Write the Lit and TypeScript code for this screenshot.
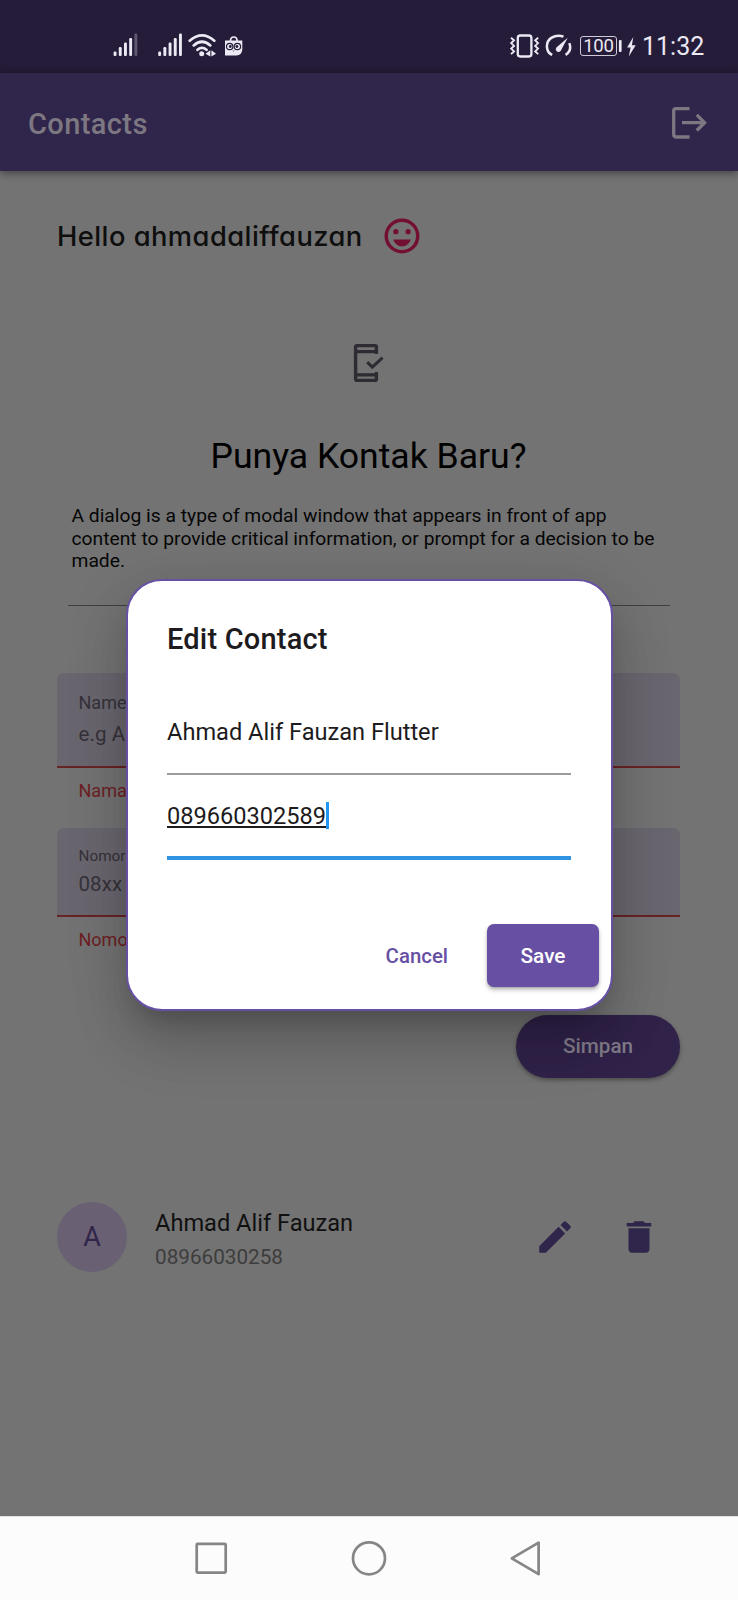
import { LitElement, html, css, svg } from "lit";
import { customElement, property } from "lit/decorators.js";

@customElement("status-bar")
class StatusBar extends LitElement {
  static styles = css`
    :host { display: flex; height: 73px; background: #241c38; color: #ece8f4; box-sizing: border-box; padding: 0 35px 0 112px; justify-content: space-between; }
    .group { display: flex; align-items: center; height: 91px; }
    .signals { display: block; width: 134px; height: 26px; }
    .icons { display: block; width: 67px; height: 26px; }
    .battery { box-sizing: border-box; width: 37px; height: 20px; border: 1.4px solid #cfcad8; border-radius: 3px; font-size: 18.6px; line-height: 18px; text-align: center; letter-spacing: -0.2px; margin-left: 4px; }
    .charge { display: block; width: 22px; height: 26px; }
    .time { font-size: 25px; line-height: 30px; margin: 2px 0 0 3px; width: 61px; white-space: nowrap; }
  `;
  render() {
    const bars = (x: number, faded: boolean) =>
      [0, 1, 2, 3, 4].map(i => svg`<rect x=${x + i * 5.2} y=${18.6 - i * 4.5} width="2.9" height=${4.4 + i * 4.5} rx="1.1" fill="currentColor" opacity=${faded && i === 4 ? 0.3 : 1}></rect>`);
    return html`
      <div class="group">
        <svg class="signals" viewBox="112 32.5 134 26" fill="none" stroke="currentColor">
          <g transform="translate(0 32.5)" stroke="none">${bars(113.6, true)}${bars(158.2, false)}</g>
          <path d="M189.7 40.2Q202 29.7 214.3 40.2M193.7 44.9Q202 37.6 210.3 44.9M197.5 49.3Q202 45.6 206.5 49.3" stroke-width="2.7" stroke-linecap="round"></path>
          <circle cx="201.7" cy="53.3" r="2.5" fill="currentColor" stroke="none"></circle>
          <path d="M205.5 53.3l4.8-3.6v6.2zM216 53.3l-4.6-3.6v6.2z" fill="currentColor" stroke="none"></path>
          <path d="M230.5 40.5q0-4 3.3-4t3.3 4" stroke-width="1.7"></path>
          <path d="M225 40h17.3v9.5q-.6 5-5.8 5.5H225z" fill="currentColor" stroke="none"></path>
          <g stroke="#241c38" stroke-width="1.2"><circle cx="229.7" cy="46" r="3.2"></circle><circle cx="237.4" cy="46" r="3.2"></circle></g>
          <g fill="#241c38" stroke="none"><circle cx="230.3" cy="46" r="1.4"></circle><circle cx="236.9" cy="46" r="1.4"></circle></g>
          <path d="M232.3 50l1.3 1.4 1.3-1.4z" fill="#8b8598" stroke="none"></path>
        </svg>
      </div>
      <div class="group">
        <svg class="icons" viewBox="509 32.5 67 26" fill="none" stroke="currentColor">
          <rect x="517.8" y="35" width="13.6" height="21" rx="2.4" stroke-width="2.3"></rect>
          <path d="M511 37.3l3 2.6-2.8 2.7 2.8 2.8-2.8 2.7 2.8 2.8-3 2.7M538.2 37.3l-3 2.6 2.8 2.7-2.8 2.8 2.8 2.7-2.8 2.8 3 2.7" stroke-width="1.9"></path>
          <path d="M552.2 54.4C545.5 51.5 545.2 41.5 551.3 37.4Q557.3 33.6 563.5 36.2M569.3 42.6Q572.2 50 565.6 54.4" stroke-width="2.5"></path>
          <path d="M567.7 37.3L560.8 50.2A2.7 2.7 0 1 1 556.9 46.6z" fill="currentColor" stroke="none"></path>
        </svg>
        <div class="battery">100</div>
        <svg class="charge" viewBox="617.5 32.5 22 26" fill="currentColor">
          <rect x="619.4" y="39.4" width="2.7" height="12" rx="1"></rect>
          <path d="M633.8 36.5L627.6 47h3.5l-1.8 9L636.2 44.8h-3.8z"></path>
        </svg>
        <div class="time">11:32</div>
      </div>`;
  }
}

@customElement("filled-field")
class FilledField extends LitElement {
  @property() label = "";
  @property() hint = "";
  @property() error = "";
  static styles = css`
    :host { display: flex; flex-direction: column; }
    .box { box-sizing: border-box; background: #6a666f; border-bottom: 2px solid #682325; border-radius: 7px 7px 0 0; padding: 17px 21.5px 0; color: #353239; height: 95px; }
    .label { font-size: 18px; line-height: 26px; }
    .hint { font-size: 20.5px; line-height: 36px; letter-spacing: .1px; }
    .error { font-size: 18px; line-height: 24px; padding: 11px 21.5px 0; color: #6d2023; }
    :host([compact]) .box { height: 89px; padding-top: 16px; }
    :host([compact]) .label { font-size: 15.3px; line-height: 24px; }
    :host([compact]) .hint { line-height: 32px; }
  `;
  render() {
    return html`<div class="box"><div class="label">${this.label}</div><div class="hint">${this.hint}</div></div><div class="error">${this.error}</div>`;
  }
}

@customElement("edit-dialog")
class EditDialog extends LitElement {
  static styles = css`
    :host { display: flex; flex-direction: column; box-sizing: border-box; background: #fff; border: 2px solid #6750a4; border-radius: 36px; padding: 40px 12px 22px 39px; color: #1d1b20; box-shadow: 0 19px 26px -12px rgba(0,0,0,.2), 0 36px 58px 0 rgba(0,0,0,.12), 0 15px 60px 6px rgba(0,0,0,.11); }
    .title { font-size: 29px; line-height: 36px; font-weight: 500; letter-spacing: .2px; }
    .field { box-sizing: border-box; width: 404px; font-size: 23.6px; line-height: 30px; display: flex; align-items: flex-start; }
    .name { height: 59px; margin-top: 60px; border-bottom: 2px solid #9c9c9c; }
    .phone { height: 86px; border-bottom: 4px solid #3093e2; padding-top: 26px; }
    .num { text-decoration: underline; text-decoration-thickness: 1.5px; text-underline-offset: 2px; text-decoration-skip-ink: none; }
    .caret { width: 3px; height: 27px; background: #2196f3; margin-top: 1px; }
    .actions { display: flex; justify-content: flex-end; align-items: center; gap: 39px; margin-top: 64px; font-size: 20.4px; font-weight: 500; }
    .cancel { color: #6750a4; }
    .save { width: 112px; height: 63px; line-height: 64px; text-align: center; color: #fff; background: #6750a4; border-radius: 7px; font-size: 20.8px; box-shadow: 0 3px 4px rgba(0,0,0,.25), 0 1px 2px rgba(0,0,0,.15); }
  `;
  render() {
    return html`
      <div class="title">Edit Contact</div>
      <div class="field name">Ahmad Alif Fauzan Flutter</div>
      <div class="field phone"><span class="num">089660302589</span><span class="caret"></span></div>
      <div class="actions"><span class="cancel">Cancel</span><span class="save">Save</span></div>`;
  }
}

@customElement("app-root")
class AppRoot extends LitElement {
  static styles = css`
    :host { display: flex; flex-direction: column; position: relative; width: 738px; height: 1600px; overflow: hidden; background: #737373; font-family: Roboto, sans-serif; }
    .bar { position: relative; display: flex; align-items: center; justify-content: space-between; height: 98px; box-sizing: border-box; padding: 1px 30px 0 28px; background: #30254a; box-shadow: 0 2px 8px rgba(0,0,0,.45); color: #7d7782; }
    .heading { font-size: 29px; line-height: 36px; font-weight: 500; letter-spacing: .4px; padding-top: 2px; }
    .logout { display: block; width: 37px; height: 34px; }
    .main { flex: 1; display: flex; flex-direction: column; padding: 44px 58px 0 57px; }
    .greeting { display: flex; align-items: center; height: 42px; gap: 19px; font-family: Inter, sans-serif; font-weight: 500; font-size: 27.3px; letter-spacing: .46px; color: #0e0e0e; font-feature-settings: "cv11", "ss03"; }
    .hello { width: 305px; white-space: nowrap; line-height: 42px; padding-top: 2px; }
    .icon { display: block; width: 42px; height: 42px; }
    .smile { color: #740f34; }
    .phone { display: block; width: 32px; height: 40px; margin: 86px 0 0 296px; }
    .ask { font-size: 35.6px; line-height: 44px; text-align: center; margin-top: 51px; color: #000; }
    .about { font-size: 19.25px; line-height: 22.5px; margin: 27px 0 0 14.5px; width: 600px; color: #060606; }
    .rule { height: 1px; background: #404040; margin: 32px 10px 0 11px; }
    .first { margin-top: 67.5px; }
    .second { margin-top: 25px; }
    .simpan { align-self: flex-end; width: 164px; height: 63px; line-height: 63px; margin-top: 63px; border-radius: 32px; text-align: center; background: #302249; color: #817b89; font-size: 20.7px; font-weight: 500; box-shadow: 0 2px 4px rgba(0,0,0,.35); }
    .contact { display: flex; align-items: center; height: 70px; margin-top: 124px; padding-right: 20px; color: #30254a; }
    .avatar { width: 70px; height: 70px; border-radius: 50%; background: #6a6074; line-height: 70px; text-align: center; font-size: 27px; }
    .who { flex: 1; padding: 6px 0 0 28px; }
    .name { font-size: 23.6px; line-height: 34px; color: #101010; }
    .number { font-size: 20.7px; line-height: 34px; color: #3d3d3d; }
    .edit { margin-right: 42px; }
    .nav { height: 84px; background: #fcfcfc; border-top: 1px solid #e0e0e0; box-sizing: border-box; display: flex; justify-content: center; }
    .buttons { display: block; width: 350px; height: 83px; }
    .dialog { position: absolute; left: 126px; top: 579px; width: 487px; height: 432px; }
  `;
  render() {
    return html`
      <status-bar></status-bar>
      <div class="bar">
        <div class="heading">Contacts</div>
        <svg class="logout" viewBox="671 106 37 34" fill="none" stroke="currentColor" stroke-width="3.3">
          <path d="M689.5 108.6H676Q673.7 108.6 673.7 111V134.6Q673.7 137 676 137H689.5"></path>
          <path d="M682 122.7H704.5M696.8 114.9L704.6 122.7L696.8 130.5"></path>
        </svg>
      </div>
      <div class="main">
        <div class="greeting">
          <span class="hello">Hello ahmadaliffauzan</span>
          <svg class="icon smile" viewBox="0 0 24 24" fill="currentColor">
            <circle cx="12" cy="12" r="9" fill="none" stroke="currentColor" stroke-width="2"></circle>
            <circle cx="8.5" cy="9.5" r="1.5"></circle><circle cx="15.5" cy="9.5" r="1.5"></circle>
            <path d="M12 18c2.28 0 4.22-1.66 5-4H7c.78 2.34 2.72 4 5 4z"></path>
          </svg>
        </div>
        <svg class="phone" viewBox="353 343 32 40" fill="none" stroke="#2e2b33" stroke-width="3.4">
          <path d="M376.4 354V347Q376.4 345.6 375 345.6H357Q355.6 345.6 355.6 347V379Q355.6 380.4 357 380.4H375Q376.4 380.4 376.4 379V372M355.6 351.6H376.4M355.6 374.9H376.4"></path>
          <path d="M367.2 362.2L372.3 367.1L382.6 357.6" stroke-width="3"></path>
        </svg>
        <div class="ask">Punya Kontak Baru?</div>
        <div class="about">A dialog is a type of modal window that appears in front of app content to provide critical information, or prompt for a decision to be made.</div>
        <div class="rule"></div>
        <filled-field class="first" label="Name" hint="e.g A" error="Nama"></filled-field>
        <filled-field class="second" compact label="Nomor" hint="08xx" error="Nomo"></filled-field>
        <div class="simpan">Simpan</div>
        <div class="contact">
          <div class="avatar">A</div>
          <div class="who"><div class="name">Ahmad Alif Fauzan</div><div class="number">08966030258</div></div>
          <svg class="icon edit" viewBox="0 0 24 24" fill="currentColor"><path d="M3 17.25V21h3.75L17.81 9.94l-3.75-3.75L3 17.25zM20.71 7.04a1 1 0 0 0 0-1.41l-2.34-2.34a1 1 0 0 0-1.41 0l-1.83 1.83 3.75 3.75 1.83-1.83z"></path></svg>
          <svg class="icon" viewBox="0 0 24 24" fill="currentColor"><path d="M6 19c0 1.1.9 2 2 2h8c1.1 0 2-.9 2-2V7H6v12zM19 4h-3.5l-1-1h-5l-1 1H5v2h14V4z"></path></svg>
        </div>
      </div>
      <div class="nav">
        <svg class="buttons" viewBox="194 1517 350 83" fill="none" stroke="#868686" stroke-width="2.7" stroke-linejoin="round">
          <rect x="196.7" y="1543.8" width="29" height="28.8" rx="1"></rect>
          <circle cx="369" cy="1558.3" r="16"></circle>
          <path d="M511.8 1558.4L538.6 1542.6V1574.2z"></path>
        </svg>
      </div>
      <edit-dialog class="dialog"></edit-dialog>`;
  }
}
